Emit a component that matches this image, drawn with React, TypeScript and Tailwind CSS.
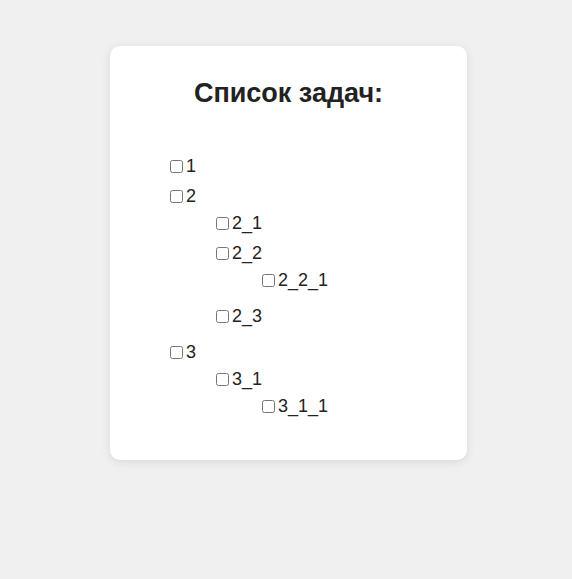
import React from "react";

type Task = { id: string; children?: Task[] };

const tasks: Task[] = [
  { id: "1" },
  {
    id: "2",
    children: [
      { id: "2_1" },
      { id: "2_2", children: [{ id: "2_2_1" }] },
      { id: "2_3" },
    ],
  },
  { id: "3", children: [{ id: "3_1", children: [{ id: "3_1_1" }] }] },
];

function TaskList({ items, nested }: { items: Task[]; nested?: boolean }) {
  return (
    <ul className={nested ? "pl-[46px] mt-[7px] mb-[16px]" : "pl-[56px]"}>
      {items.map((t) => (
        <li key={t.id} className="mb-[10px]">
          <label className="flex items-center h-[20px]">
            <input type="checkbox" className="m-0 mt-[3px] mr-[3px] mb-[3px] ml-[4px] w-[13px] h-[13px]" />
            <span>{t.id}</span>
          </label>
          {t.children && <TaskList items={t.children} nested />}
        </li>
      ))}
    </ul>
  );
}

export default function App() {
  return (
    <div
      className="min-h-[579px] bg-[#f0f0f0] pt-[46px] pb-[40px]"
      style={{ fontFamily: '"Liberation Sans", Arial, sans-serif' }}
    >
      <div className="ml-[110px] w-[357px] bg-white rounded-[10px] shadow-[0_2px_10px_rgba(0,0,0,0.1)] pt-[33px] pb-[28px]">
        <h2 className="text-center text-[27px] leading-[28px] font-bold text-[#222]">
          Список задач:
        </h2>
        <div className="mt-[49px] text-[18px] text-[#222]">
          <TaskList items={tasks} />
        </div>
      </div>
    </div>
  );
}
